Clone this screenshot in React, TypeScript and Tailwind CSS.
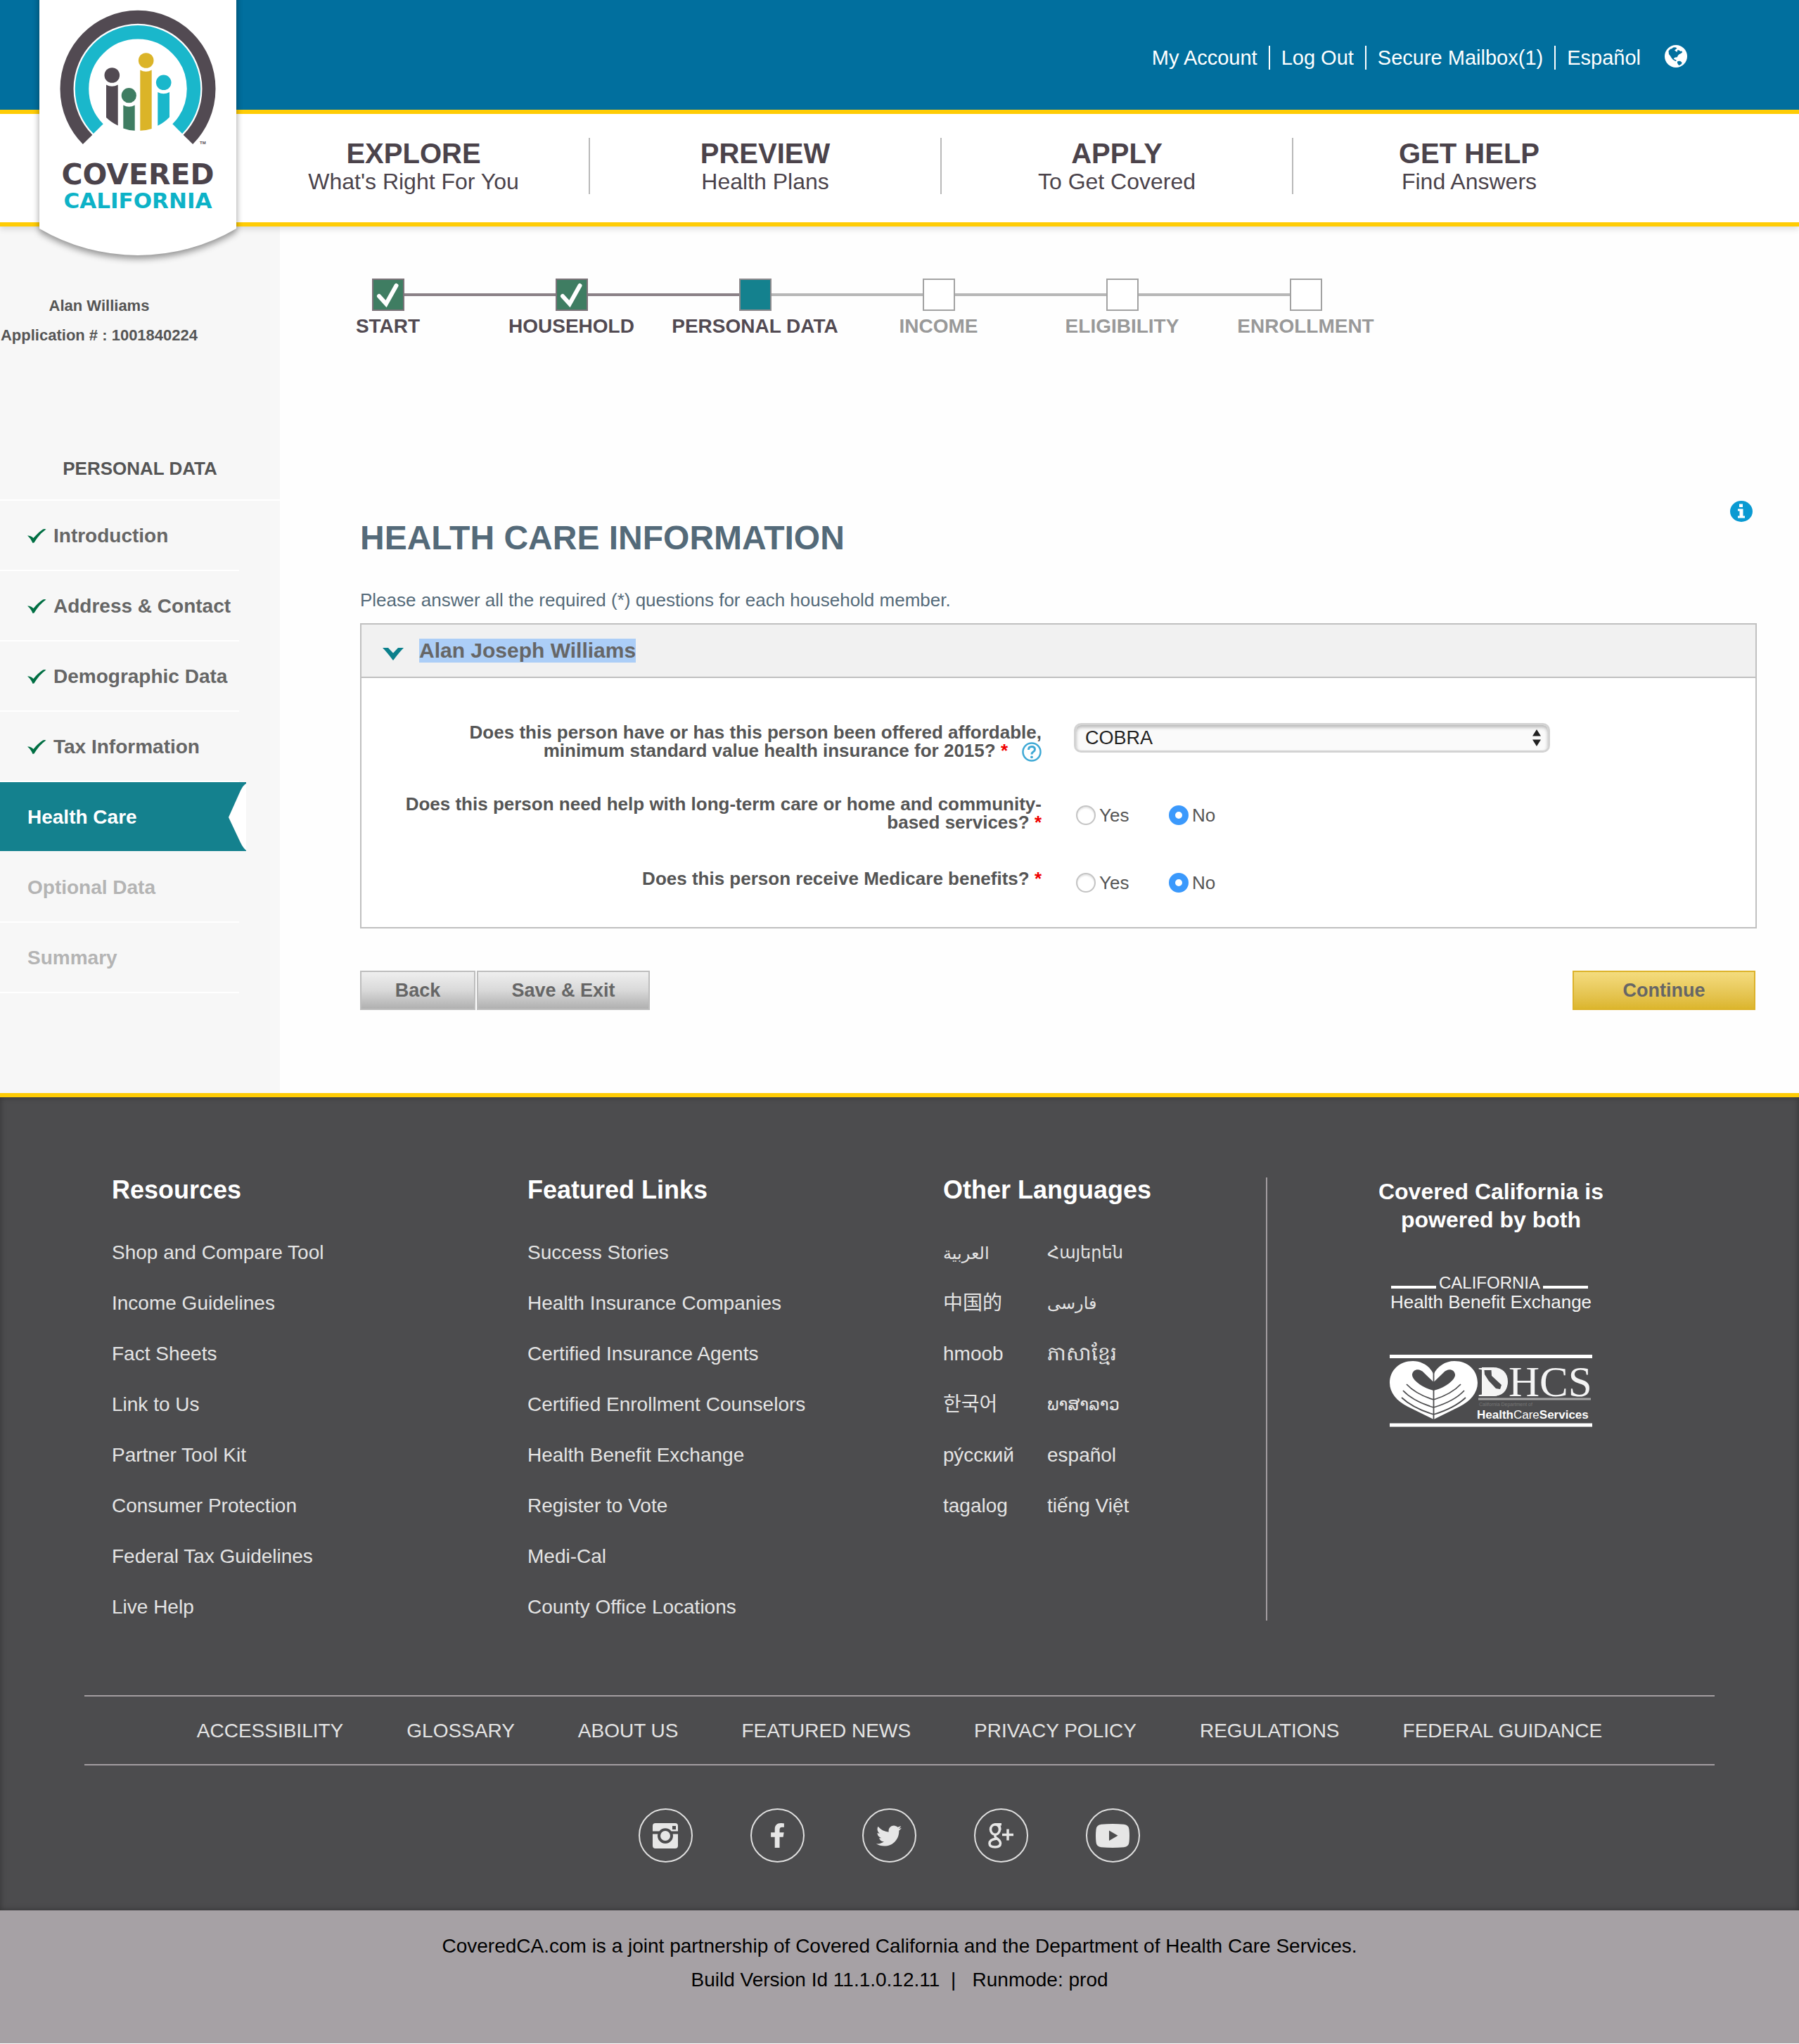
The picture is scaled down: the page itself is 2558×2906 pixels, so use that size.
import React from "react";
import { FaFacebookF, FaTwitter } from "react-icons/fa";

type StepState = "done" | "current" | "todo";

const steps: { label: string; state: StepState }[] = [
  { label: "START", state: "done" },
  { label: "HOUSEHOLD", state: "done" },
  { label: "PERSONAL DATA", state: "current" },
  { label: "INCOME", state: "todo" },
  { label: "ELIGIBILITY", state: "todo" },
  { label: "ENROLLMENT", state: "todo" },
];

const mainNav = [
  { title: "EXPLORE", sub: "What's Right For You" },
  { title: "PREVIEW", sub: "Health Plans" },
  { title: "APPLY", sub: "To Get Covered" },
  { title: "GET HELP", sub: "Find Answers" },
];

const resources = [
  "Shop and Compare Tool",
  "Income Guidelines",
  "Fact Sheets",
  "Link to Us",
  "Partner Tool Kit",
  "Consumer Protection",
  "Federal Tax Guidelines",
  "Live Help",
];

const featured = [
  "Success Stories",
  "Health Insurance Companies",
  "Certified Insurance Agents",
  "Certified Enrollment Counselors",
  "Health Benefit Exchange",
  "Register to Vote",
  "Medi-Cal",
  "County Office Locations",
];

type Language = { name: string; small?: boolean };

const languages: [Language, Language][] = [
  [{ name: "العربية", small: true }, { name: "Հայերեն", small: true }],
  [{ name: "中国的" }, { name: "فارسی", small: true }],
  [{ name: "hmoob" }, { name: "ភាសាខ្មែរ" }],
  [{ name: "한국어" }, { name: "ພາສາລາວ", small: true }],
  [{ name: "ру́сский" }, { name: "español" }],
  [{ name: "tagalog" }, { name: "tiếng Việt" }],
];

const legal = [
  "ACCESSIBILITY",
  "GLOSSARY",
  "ABOUT US",
  "FEATURED NEWS",
  "PRIVACY POLICY",
  "REGULATIONS",
  "FEDERAL GUIDANCE",
];

function Logo() {
  return (
    <svg width="320" height="390" viewBox="-20 0 320 390" role="img" aria-label="Covered California">
      <path
        d="M0 -20H280V325A277 277 0 0 1 0 325Z"
        fill="#fff"
        className="drop-shadow-[0_5px_5px_rgba(0,0,0,0.4)]"
      />
      <g fill="none" strokeWidth="19.5">
        <path d="M68.600 198.400A101 102 0 1 1 211.400 198.400" stroke="#524a52" strokeWidth="19" />
        <path d="M83.800 183.200A79.500 80.500 0 1 1 196.200 183.200" stroke="#1ab7cb" />
      </g>
      <g fill="#524a52">
        <circle cx="103.3" cy="107" r="10.8" />
        <path d="M95 120.500Q103 125 111.700 120.500V178.500Q102 174 95 167Z" />
      </g>
      <g fill="#3f7d62">
        <circle cx="127.300" cy="135.700" r="10.6" />
        <path d="M119.300 149.500Q127.500 154 135.700 149.500V185.800Q127 185.500 119.300 182.500Z" />
      </g>
      <g fill="#dbb428">
        <circle cx="151.700" cy="86" r="10.8" />
        <path d="M143.300 99.500Q151.500 104 159.700 99.500V183Q152 185.500 143.300 185.800Z" />
      </g>
      <g fill="#1ab7cb">
        <circle cx="176.700" cy="117.300" r="10.8" />
        <path d="M168.300 131Q176.500 135.500 185 131V166.500Q178 174 168.300 178.800Z" />
      </g>
      <text x="228" y="205" fontSize="6" fontWeight="700" fill="#524a52">TM</text>
      <g textAnchor="middle" fontWeight="700" fontFamily="DejaVu Sans, sans-serif">
        <text x="140" y="262" fontSize="41" fill="#4b434b">COVERED</text>
        <text x="140" y="296" fontSize="31" fill="#0db2c7">CALIFORNIA</text>
      </g>
    </svg>
  );
}

function Globe() {
  return (
    <svg width="32" height="32" viewBox="0 0 32 32" className="mt-1" aria-hidden="true">
      <circle cx="16" cy="16" r="16" fill="#fff" />
      <path
        fill="#016f9e"
        d="M5.500 8.500L8 5.800L10.500 5L12 3.500L15 3.200L17.500 4.200L16 6L14 7.500L16 9L17.500 10L18.500 7L20.500 7.500L22.500 9L24.500 8.500L25 10.500L23 12L20.500 13.200L19 14.800L17.800 17.200L15.500 17.500L13.500 18.200L13 20L14.500 20.500L17 22L15.500 23L12 21L9.800 18.500L8 15.500L6 13Z M18.500 23L22 22.800L24.500 24.800L24 27L20.500 29L19 27.500L17.800 25Z"
      />
    </svg>
  );
}

function StepBox({ state }: { state: StepState }) {
  if (state === "done") {
    return (
      <span className="flex size-[46px] shrink-0 items-center justify-center border-2 border-[#7c7379] bg-[#3f7d62]">
        <svg width="34" height="36" viewBox="0 0 34 36" aria-hidden="true">
          <path d="M4 20L14 31L28.500 5" fill="none" stroke="#fff" strokeWidth="6" strokeLinecap="round" />
        </svg>
      </span>
    );
  }
  if (state === "current") {
    return <span className="size-[46px] shrink-0 border-2 border-[#8f8a8d] bg-[#14818e]" />;
  }
  return <span className="size-[46px] shrink-0 border-2 border-[#a2a2a2] bg-white" />;
}

function Stepper() {
  return (
    <ol className="ml-[23px] flex">
      {steps.map((s, i) => {
        const left = i === 0 ? "bg-transparent" : i <= 2 ? "bg-[#8b8187]" : "bg-[#b7b7b7]";
        const right = i === steps.length - 1 ? "bg-transparent" : i < 2 ? "bg-[#8b8187]" : "bg-[#b7b7b7]";
        return (
          <li key={s.label} className="w-[261px]">
            <div className="flex items-center">
              <span className={`h-1 flex-1 ${left}`} />
              <StepBox state={s.state} />
              <span className={`h-1 flex-1 ${right}`} />
            </div>
            <div
              className={`mt-1.5 text-center text-[28px] leading-8 font-bold whitespace-nowrap ${
                s.state === "todo" ? "text-[#999]" : "text-[#524a52]"
              }`}
            >
              {s.label}
            </div>
          </li>
        );
      })}
    </ol>
  );
}

function TickIcon() {
  return (
    <svg width="27" height="22" viewBox="0 0 27 22" className="mr-2.5" aria-hidden="true">
      <path d="M0 10.500Q5 10 8.500 14Q15 6 22 1.500Q24 .500 26.500 1.500Q17 8 9.500 20.500L7.500 21Q5 14.500 0 10.500Z" fill="#006f43" />
    </svg>
  );
}

function SideItem({ label, state }: { label: string; state: StepState }) {
  if (state === "current") {
    return (
      <li className="h-[100px]">
        <a href="#" aria-current="page" className="flex h-[98px] w-[350px] items-center justify-between bg-[#14818e] pl-[39px] text-[28px] font-bold text-white">
          <span className="pt-0.5">{label}</span>
          <svg width="25" height="98" viewBox="0 0 25 98" aria-hidden="true">
            <path d="M25 2Q21 4 17 12L0 50L17 86Q21 94 25 97Z" fill="#fff" />
          </svg>
        </a>
      </li>
    );
  }
  return (
    <li className="h-[100px] w-[340px] border-b-2 border-white">
      <a
        href="#"
        className={`flex h-full items-center pt-0.5 pl-[39px] text-[28px] font-bold whitespace-nowrap ${
          state === "done" ? "text-[#666]" : "text-[#b4b4b4]"
        }`}
      >
        {state === "done" && <TickIcon />}
        {label}
      </a>
    </li>
  );
}

function RadioPair({ name, labelId }: { name: string; labelId: string }) {
  const cls =
    "mr-[5px] size-7 appearance-none rounded-full border-2 border-[#c4c4c4] bg-white shadow-[inset_0_2px_2px_rgba(0,0,0,0.1)] checked:border-[9px] checked:border-[#3b99fc] checked:shadow-none";
  return (
    <div role="radiogroup" aria-labelledby={labelId} className="flex text-[26px] leading-7 text-[#555]">
      <label className="flex w-[132px] items-center">
        <input type="radio" name={name} className={cls} />
        Yes
      </label>
      <label className="flex items-center">
        <input type="radio" name={name} defaultChecked className={cls} />
        No
      </label>
    </div>
  );
}

const Star = () => <span className="text-[#f00000]">*</span>;

function Sidebar() {
  return (
    <aside className="w-[398px] shrink-0 bg-[#f7f7f7] pt-[92px] pb-[142px]">
      <div className="w-[282px] text-center text-[22px] leading-[42px] font-bold whitespace-nowrap text-[#555]">
        <p>Alan Williams</p>
        <p>Application # : 1001840224</p>
      </div>
      <h2 className="mt-[148px] border-b-2 border-white pb-6 text-center text-[26px] leading-10 font-bold text-[#555]">
        PERSONAL DATA
      </h2>
      <ul>
        <SideItem label="Introduction" state="done" />
        <SideItem label="Address & Contact" state="done" />
        <SideItem label="Demographic Data" state="done" />
        <SideItem label="Tax Information" state="done" />
        <SideItem label="Health Care" state="current" />
        <SideItem label="Optional Data" state="todo" />
        <SideItem label="Summary" state="todo" />
      </ul>
    </aside>
  );
}

function HealthForm() {
  const row = "grid grid-cols-[967fr_1015fr]";
  const label = "block w-[910px] text-right text-[26px] leading-[26px] font-bold text-[#555]";
  const grey =
    "h-14 border-2 border-[#bdbdbd] bg-gradient-to-b from-[#efefef] via-[#d9d9d9] to-[#b0b0b0] text-[27px] font-bold text-[#666]";
  return (
    <form className="mt-[232px] pr-[60px] pl-[114px]">
      <div className="flex items-start justify-between pr-1.5">
        <h1 className="pt-[25px] text-[48px] leading-[56px] font-bold text-[#546a79]">HEALTH CARE INFORMATION</h1>
        <button type="button" aria-label="Information">
          <svg width="32" height="30" viewBox="0 0 32 30" aria-hidden="true">
            <ellipse cx="16" cy="15" rx="16" ry="15" fill="#0a9ad2" />
            <path d="M13 4.500H18V9H13ZM11 11.500H18.500V21.500H21V24.500H11V21.500H13.500V14.500H11Z" fill="#fff" />
          </svg>
        </button>
      </div>
      <p className="mt-[45px] text-[26px] leading-[30px] text-[#546a79]">
        Please answer all the required (*) questions for each household member.
      </p>

      <section className="mt-[18px] border-2 border-[#c0c0c0] bg-white">
        <div className="flex h-[76px] items-center border-b-2 border-[#c0c0c0] bg-[#f1f1f1] pl-[30px]">
          <svg width="30" height="18" viewBox="0 0 30 18" className="mt-2.5 mr-[22px]" aria-hidden="true">
            <path d="M0 0H8L15 7.500L22 0H30Q24 6 15 18Q6 6 0 0Z" fill="#0b808c" />
          </svg>
          <h2 className="bg-[#accef7] text-[30px] leading-[34px] font-bold text-[#666]">Alan Joseph Williams</h2>
        </div>

        <div className="pt-16">
          <div className={`${row} min-h-[102px]`}>
            <div className="flex justify-end">
              <label htmlFor="insurance" className={label}>
                Does this person have or has this person been offered affordable, minimum standard value health
                insurance for 2015? <Star />
                <svg width="28" height="28" viewBox="0 0 28 28" className="-my-2 ml-5 inline-block align-middle" aria-hidden="true">
                  <circle cx="14" cy="14" r="12.500" fill="#fff" stroke="#3fa9d5" strokeWidth="2.500" />
                  <path d="M9.500 11Q9.500 6.500 14 6.500Q18.500 6.500 18.500 10.500Q18.500 12.500 16 14Q14 15.200 14 17.500" fill="none" stroke="#3fa9d5" strokeWidth="3" />
                  <circle cx="14" cy="21.300" r="1.900" fill="#3fa9d5" />
                </svg>
              </label>
            </div>
            <div className="pl-[46px]">
              <div className="relative w-[677px]">
                <select
                  id="insurance"
                  className="h-[42px] w-full appearance-none rounded-[10px] border-[3px] border-[#d3d3d3] bg-[#fafafa] pl-[13px] text-[27px] leading-8 text-[#222] shadow-[inset_0_3px_5px_rgba(0,0,0,0.28)]"
                >
                  <option>COBRA</option>
                </select>
                <svg width="12" height="24" viewBox="0 0 12 24" className="pointer-events-none absolute top-[9px] right-[13px]" aria-hidden="true">
                  <path d="M6 0L12 9.500H0ZM6 24L12 14.500H0Z" fill="#222" />
                </svg>
              </div>
            </div>
          </div>

          <div className={`${row} min-h-[106px]`}>
            <div className="flex justify-end">
              <div id="longterm" className={label}>
                Does this person need help with long-term care or home and community-based services? <Star />
              </div>
            </div>
            <div className="pt-[15px] pl-[49px]">
              <RadioPair name="longterm" labelId="longterm" />
            </div>
          </div>

          <div className={`${row} min-h-[82px]`}>
            <div className="flex justify-end">
              <div id="medicare" className={label}>
                Does this person receive Medicare benefits? <Star />
              </div>
            </div>
            <div className="pt-[5px] pl-[49px]">
              <RadioPair name="medicare" labelId="medicare" />
            </div>
          </div>
        </div>
      </section>

      <div className="mt-[60px] flex gap-0.5 pr-0.5">
        <button type="button" className={`${grey} w-[164px]`}>Back</button>
        <button type="button" className={`${grey} w-[246px]`}>Save &amp; Exit</button>
        <button
          type="submit"
          className="ml-auto h-14 w-[260px] border-2 border-[#dcb22a] bg-gradient-to-b from-[#f4dc7e] to-[#dcb62c] text-[27px] font-bold text-[#666]"
        >
          Continue
        </button>
      </div>
    </form>
  );
}

function LinkColumn({ title, items }: { title: string; items: string[] }) {
  return (
    <div>
      <h3 className="text-[36px] leading-9 font-bold text-white">{title}</h3>
      <ul className="mt-[35px] text-[28px] leading-[72px] text-[#e4e4e4]">
        {items.map((t) => (
          <li key={t}>
            <a href="#">{t}</a>
          </li>
        ))}
      </ul>
    </div>
  );
}

function LanguageLink({ name, small }: Language) {
  return (
    <a href="#" className={small ? "text-2xl leading-[72px]" : ""}>
      {name}
    </a>
  );
}

function ExchangeLogo() {
  return (
    <svg width="288" height="68" viewBox="0 -8 288 68" role="img" aria-label="California Health Benefit Exchange">
      <path d="M2 17H66M218 17H282" stroke="#fff" strokeWidth="4" />
      <g fill="#f4f4f4" textAnchor="middle">
        <text x="142" y="19" fontSize="24">CALIFORNIA</text>
        <text x="144" y="47" fontSize="26">Health Benefit Exchange</text>
      </g>
    </svg>
  );
}

function DhcsLogo() {
  return (
    <svg width="288" height="103" viewBox="0 0 288 103" role="img" aria-label="DHCS Health Care Services">
      <path d="M0 2.500H288M0 100H288" stroke="#fff" strokeWidth="5" />
      <path
        d="M62.500 92L26 74C10 66 0 54 0 40C0 22 14 9 33 9C46 9 58 17 62.500 28C67 17 79 9 92 9C111 9 125 22 125 40C125 54 115 66 99 74Z"
        fill="#fff"
      />
      <path
        d="M62.500 39L49 26C42 18 33 21 32 28C31 34 43 46 62.500 51C82 46 94 34 93 28C92 21 83 18 76 26Z"
        fill="#4c4c4e"
      />
      <path
        d="M62.500 18V92M24 42Q37 56 62.500 64Q88 56 101 42M19 51Q33 66 62.500 75Q92 66 106 51M17 61Q33 76 62.500 85Q92 76 108 61"
        fill="none"
        stroke="#4c4c4e"
        strokeWidth="1.800"
      />
      <g fill="#f4f4f4" fontFamily="Liberation Serif, serif">
        <text x="125" y="59" fontSize="62">D</text>
        <path d="M131 18H147C160 18 168 26 168 38C168 51 159 59 146 59H131Z" />
        <text x="169" y="59" fontSize="61">HCS</text>
      </g>
      <path d="M134.500 22H144.500L145 30L159 43L157 49L151 48L140.700 37L135 28Z" fill="#4c4c4e" />
      <path d="M126 63H286" stroke="#a5a5a5" strokeWidth="3" />
      <text x="127" y="73" fontSize="7" fill="#777">California Department of</text>
      <text x="124" y="91" fontSize="17" fontWeight="700" fill="#fff">
        Health<tspan fontWeight="400">Care</tspan>Services
      </text>
    </svg>
  );
}

const socials = [
  {
    name: "Instagram",
    icon: (
      <svg width="36" height="36" viewBox="0 0 36 36" aria-hidden="true">
        <path
          fillRule="evenodd"
          fill="#e6e6e6"
          d="M4 0H32Q36 0 36 4V11.500H26.500A10.500 10.500 0 0 0 9.500 11.500H0V4Q0 0 4 0ZM28 4V9H33V4Z"
        />
        <path fill="#e6e6e6" d="M0 15.500H7.300A11 11 0 1 0 28.700 15.500H36V32Q36 36 32 36H4Q0 36 0 32Z" />
        <circle cx="18" cy="18" r="7" fill="#e6e6e6" />
      </svg>
    ),
  },
  { name: "Facebook", icon: <FaFacebookF size={35} /> },
  { name: "Twitter", icon: <FaTwitter size={36} /> },
  {
    name: "Google Plus",
    icon: (
      <svg width="38" height="36" viewBox="0 0 38 36" fill="none" stroke="#e6e6e6" aria-hidden="true">
        <g strokeWidth="3.500">
          <ellipse cx="11" cy="9" rx="6.500" ry="7.200" />
          <path d="M10 1.800H20M15.500 2.500Q18.500 5 17.500 10M12 16.500Q9.500 18.500 12.500 21Q18.500 25 18.500 28.500Q18.500 34 11 34Q3 34 3 29Q3 23 13.500 22" />
        </g>
        <path d="M29 8.500V24.500M21 16.500H37" strokeWidth="3.500" />
      </svg>
    ),
  },
  {
    name: "YouTube",
    icon: (
      <svg width="48" height="34" viewBox="0 0 48 34" aria-hidden="true">
        <path
          fillRule="evenodd"
          fill="#e6e6e6"
          d="M8 .8Q24 -.6 40 .8Q47 1.500 47.500 8Q48.500 17 47.500 26Q47 32.500 40 33.200Q24 34.600 8 33.200Q1 32.500 .5 26Q-.5 17 .5 8Q1 1.500 8 .8ZM19 9.500V24L31.500 16.800Z"
        />
      </svg>
    ),
  },
];

function Footer() {
  return (
    <footer className="border-t-[6px] border-[#ffcc05] bg-[#4c4c4e] px-[120px] pt-[114px] pb-[68px] shadow-[inset_0_0_8px_rgba(0,0,0,0.35)]">
      <div className="grid grid-cols-[591fr_591fr_459fr_638fr] pl-[39px]">
        <LinkColumn title="Resources" items={resources} />
        <LinkColumn title="Featured Links" items={featured} />
        <div>
          <h3 className="text-[36px] leading-9 font-bold text-white">Other Languages</h3>
          <ul className="mt-[35px] text-[28px] leading-[72px] text-[#e4e4e4]">
            {languages.map(([a, b]) => (
              <li key={a.name} className="flex h-[72px] whitespace-nowrap">
                <span className="w-[148px]">
                  <LanguageLink {...a} />
                </span>
                <LanguageLink {...b} />
              </li>
            ))}
          </ul>
        </div>
        <div className="flex h-[630px] flex-col items-center border-l-2 border-[#a39da1]">
          <h3 className="text-center text-[32px] leading-10 font-bold text-white">
            Covered California is
            <br />
            powered by both
          </h3>
          <div className="mt-[51px]">
            <ExchangeLogo />
          </div>
          <div className="mt-[53px]">
            <DhcsLogo />
          </div>
        </div>
      </div>

      <nav
        aria-label="Legal"
        className="mt-[89px] flex h-[100px] items-center justify-center gap-[90px] border-y-2 border-[#a39da1] pt-0.5 text-[28px] whitespace-nowrap text-[#e4e4e4]"
      >
        {legal.map((t) => (
          <a key={t} href="#">
            {t}
          </a>
        ))}
      </nav>

      <div className="mt-[61px] flex justify-center gap-[82px] pr-[30px]">
        {socials.map((s) => (
          <a
            key={s.name}
            href="#"
            aria-label={s.name}
            className="flex size-[77px] items-center justify-center rounded-full border-2 border-[#e0e0e0] text-[#e6e6e6]"
          >
            {s.icon}
          </a>
        ))}
      </div>
    </footer>
  );
}

export default function App() {
  return (
    <div className="bg-[#fefefe] font-['Liberation_Sans','DejaVu_Sans','Noto_Sans_CJK_SC','Noto_Sans_CJK_KR',sans-serif]">
      <header className="relative z-10 border-b-[6px] border-[#ffcc05] bg-white shadow-[0_4px_8px_rgba(0,0,0,0.12)]">
        <div className="flex h-[162px] items-center justify-end border-b-[6px] border-[#ffcc05] bg-[#016f9e] pr-[159px] text-[29px] text-white">
          <nav aria-label="Account" className="mt-2 flex items-center leading-[34px]">
            <a href="#" className="border-r-2 border-white pr-4">My Account</a>
            <a href="#" className="border-r-2 border-white px-4">Log Out</a>
            <a href="#" className="border-r-2 border-white px-4">Secure Mailbox(1)</a>
            <a href="#" className="pr-[34px] pl-4">Español</a>
          </nav>
          <Globe />
        </div>
        <nav aria-label="Main" className="mr-[219px] ml-[339px] grid grid-cols-4 pt-[34px] pb-10 text-center text-[#4b434b]">
          {mainNav.map((n) => (
            <a key={n.title} href="#" className="border-r-2 border-[#b9b9b9] last:border-r-0">
              <span className="block text-[40px] leading-[44px] font-bold">{n.title}</span>
              <span className="block text-[32px] leading-9">{n.sub}</span>
            </a>
          ))}
        </nav>
        <a href="#" className="absolute top-0 left-9">
          <Logo />
        </a>
      </header>

      <div className="flex">
        <Sidebar />
        <main className="flex-1 pt-[74px]">
          <Stepper />
          <HealthForm />
        </main>
      </div>

      <Footer />

      <div className="bg-[#a6a1a5] pt-[27px] pb-[66px] text-center text-[28px] leading-[48px] text-black">
        <p>CoveredCA.com is a joint partnership of Covered California and the Department of Health Care Services.</p>
        <p>Build Version Id 11.1.0.12.11 &nbsp;|&nbsp;&nbsp; Runmode: prod</p>
      </div>
    </div>
  );
}
